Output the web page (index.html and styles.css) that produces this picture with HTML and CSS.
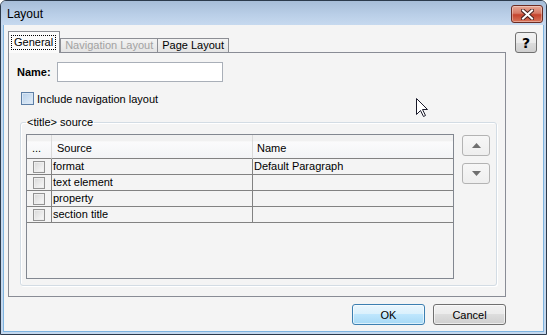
FILE: index.html
```html
<!DOCTYPE html>
<html>
<head>
    <title>Layout</title>
    <link rel="stylesheet" href="styles.css">
</head>
<body>
    <div class="window">
        <div class="titlebar">
            <span class="title">Layout</span>
            <button class="close-btn" title="Close">
                <svg width="13" height="11" viewBox="0 0 13 11">
                    <path d="M2 1.5 L11 9.5 M11 1.5 L2 9.5" stroke="#4a2320" stroke-width="4" stroke-linecap="square"/>
                    <path d="M2 1.5 L11 9.5 M11 1.5 L2 9.5" stroke="#ffffff" stroke-width="2" stroke-linecap="square"/>
                </svg>
            </button>
        </div>

        <div class="client">
            <div class="main-column">
                <div class="tabs">
                    <div class="tab active"><span class="focus">General</span></div>
                    <div class="tab disabled">Navigation Layout</div>
                    <div class="tab">Page Layout</div>
                </div>

                <div class="tab-panel">
                    <div class="name-row">
                        <label for="name">Name:</label>
                        <input type="text" id="name" name="name">
                    </div>

                    <div class="check-row">
                        <span class="checkbox blue"></span>
                        <span>Include navigation layout</span>
                    </div>

                    <fieldset class="group">
                        <legend>&lt;title&gt; source</legend>
                        <div class="group-body">
                            <div class="source-list">
                                <table>
                                    <colgroup>
                                        <col class="col-check">
                                        <col class="col-source">
                                        <col class="col-name">
                                    </colgroup>
                                    <thead>
                                        <tr>
                                            <th class="dots">...</th>
                                            <th>Source</th>
                                            <th class="last">Name</th>
                                        </tr>
                                    </thead>
                                    <tbody>
                                        <tr>
                                            <td><span class="checkbox small"></span></td>
                                            <td>format</td>
                                            <td class="last">Default Paragraph</td>
                                        </tr>
                                        <tr>
                                            <td><span class="checkbox small"></span></td>
                                            <td>text element</td>
                                            <td class="last"></td>
                                        </tr>
                                        <tr>
                                            <td><span class="checkbox small"></span></td>
                                            <td>property</td>
                                            <td class="last"></td>
                                        </tr>
                                        <tr>
                                            <td><span class="checkbox small"></span></td>
                                            <td>section title</td>
                                            <td class="last"></td>
                                        </tr>
                                    </tbody>
                                </table>
                            </div>

                            <div class="move-buttons">
                                <button class="move-btn" title="Move up">
                                    <svg width="9" height="5" viewBox="0 0 9 5"><path d="M4.5 0 L9 5 L0 5 Z" fill="#6f6f6f"/></svg>
                                </button>
                                <button class="move-btn" title="Move down">
                                    <svg width="9" height="5" viewBox="0 0 9 5"><path d="M0 0 L9 0 L4.5 5 Z" fill="#6f6f6f"/></svg>
                                </button>
                            </div>
                        </div>
                    </fieldset>
                </div>

                <div class="footer">
                    <button class="btn default">OK</button>
                    <button class="btn">Cancel</button>
                </div>
            </div>

            <button class="help-btn">?</button>
        </div>

        <svg class="cursor" width="13" height="20" viewBox="0 0 13 20">
            <path d="M0.5 0.5 V16.5 L4.5 12.5 L7.5 18.5 L9.5 17.5 L6.5 11.5 H11.5 Z" fill="#ffffff" stroke="#1a1a2a" stroke-width="1" stroke-linejoin="miter"/>
        </svg>
    </div>
</body>
</html>
```

FILE: styles.css
```css
body {
    margin: 0;
    font-family: "Liberation Sans", Arial, sans-serif;
    font-size: 11px;
    color: #000;
    background: #ffffff;
}

button,
input {
    font: inherit;
    color: inherit;
}

.window {
    position: relative;
    width: 547px;
    height: 335px;
    box-sizing: border-box;
    border: 1px solid #2c3a4c;
    border-radius: 6px 6px 0 0;
    background: #c4d8ee;
    display: flex;
    flex-direction: column;
    overflow: hidden;
}

.titlebar {
    height: 24px;
    flex-shrink: 0;
    display: flex;
    align-items: flex-start;
    justify-content: space-between;
    padding: 0 3px 0 6px;
    background: linear-gradient(#a7bdd8, #b9cee7 55%, #c6d9ef);
}

.title {
    font-size: 12px;
    line-height: 16px;
    margin-top: 5px;
}

.close-btn {
    width: 32px;
    height: 18px;
    margin-top: 4px;
    padding: 0;
    border: 1px solid #6b2b22;
    border-radius: 3px;
    background: linear-gradient(#e7a795, #d67a66 45%, #c5432d 55%, #d8755a);
    box-shadow: inset 0 0 0 1px rgba(255, 255, 255, 0.35);
    display: flex;
    align-items: center;
    justify-content: center;
}

.client {
    flex: 1;
    margin: 0 2px 2px;
    border: 1px solid #7eb4e0;
    border-top: none;
    background: #f4f4f4;
    display: flex;
    align-items: flex-start;
    padding: 7px 0 0 4px;
}

.main-column {
    width: 498px;
    display: flex;
    flex-direction: column;
}

.tabs {
    display: flex;
    align-items: flex-end;
    height: 20px;
}

.tab {
    height: 13px;
    line-height: 13px;
    padding: 0 4px;
    border: 1px solid #8c8e94;
    border-bottom: none;
    margin-right: -1px;
    background: linear-gradient(#f3f3f3, #e4e4e4);
    white-space: nowrap;
}

.tab.disabled {
    color: #a2a2a2;
}

.tab.active {
    position: relative;
    z-index: 1;
    height: 18px;
    padding: 3px 3px 0 2px;
    margin-bottom: -1px;
    margin-right: 0;
    background: #fbfbfb;
}

.tab.active + .tab {
    border-left-color: #8c8e94;
}

.focus {
    display: inline-block;
    padding: 0 2px;
    border: 1px dotted #000;
    line-height: 13px;
}

.tab-panel {
    height: 245px;
    box-sizing: border-box;
    border: 1px solid #898c95;
    padding: 9px 8px 0;
    background: #f4f4f4;
}

.name-row {
    display: flex;
    align-items: center;
    gap: 6px;
    height: 20px;
}

.name-row label {
    font-weight: bold;
}

.name-row input {
    width: 166px;
    height: 20px;
    box-sizing: border-box;
    border: 1px solid #a9afb8;
    background: #ffffff;
    padding: 0 3px;
}

.check-row {
    display: flex;
    align-items: center;
    gap: 3px;
    height: 13px;
    margin: 10px 0 0 4px;
}

.checkbox {
    display: block;
    box-sizing: border-box;
}

.checkbox.blue {
    width: 13px;
    height: 13px;
    border: 1px solid #5d7fa6;
    background: linear-gradient(135deg, #b6cfe9, #e3eef9);
    box-shadow: inset 0 0 0 1px #d8e6f4;
}

.checkbox.small {
    width: 12px;
    height: 12px;
    margin: 2px auto 1px;
    border: 1px solid #939393;
    background: linear-gradient(135deg, #d8d8d8, #fafafa);
    box-shadow: inset 0 0 0 1px #eeeeee;
}

.group {
    margin: 10px 0 0 3px;
    padding: 5px 6px 6px 5px;
    border: 1px solid #d3dce4;
    border-radius: 3px;
    box-shadow: inset 1px 1px 0 #ffffff, 1px 1px 0 #ffffff;
    min-width: 0;
}

.group legend {
    padding: 0 1px;
    line-height: 14px;
}

.group-body {
    display: flex;
    gap: 8px;
    align-items: flex-start;
}

.source-list {
    width: 428px;
    height: 145px;
    box-sizing: border-box;
    border: 1px solid #828790;
    background: #f4f4f4;
}

.source-list table {
    width: 100%;
    table-layout: fixed;
    border-collapse: separate;
    border-spacing: 0;
}

.col-check {
    width: 25px;
}

.col-source {
    width: 201px;
}

.col-name {
    width: 200px;
}

.source-list th {
    font-weight: normal;
    text-align: left;
    line-height: 13px;
    padding: 7px 0 3px 5px;
    border-right: 1px solid #dadada;
    border-bottom: 1px solid #828282;
    background: linear-gradient(#f1f1f1, #f1f1f1 25%, #fbfbfc 30%, #f3f4f6);
    white-space: nowrap;
}

.source-list th.last {
    padding-left: 4px;
}

.source-list td {
    line-height: 15px;
    padding: 0 0 0 1px;
    border-right: 1px solid #828282;
    border-bottom: 1px solid #828282;
    white-space: nowrap;
    overflow: hidden;
}

.source-list td:first-child {
    padding: 0;
}

.source-list .last {
    border-right: none;
}

.move-buttons {
    display: flex;
    flex-direction: column;
    gap: 7px;
    margin-top: 1px;
}

.move-btn {
    width: 28px;
    height: 21px;
    padding: 0;
    border: 1px solid #b3b3b3;
    border-radius: 3px;
    background: linear-gradient(#f7f7f7, #eeeeee);
    display: flex;
    align-items: center;
    justify-content: center;
}

.footer {
    display: flex;
    justify-content: flex-end;
    gap: 8px;
    margin-top: 7px;
}

.btn {
    width: 73px;
    height: 21px;
    padding: 0;
    border: 1px solid #707070;
    border-radius: 3px;
    background: linear-gradient(#f2f2f2, #ebebeb 50%, #dddddd 50%, #cfcfcf);
    box-shadow: inset 0 0 0 1px rgba(255, 255, 255, 0.6);
}

.btn.default {
    border-color: #3c7fb1;
    background: linear-gradient(#eaf6fd, #d9f0fc 50%, #bee6fd 50%, #a7d9f5);
}

.help-btn {
    width: 22px;
    height: 21px;
    margin-left: 9px;
    padding: 0;
    border: 1px solid #707070;
    border-radius: 3px;
    background: linear-gradient(#f2f2f2, #ebebeb 50%, #dddddd 50%, #cfcfcf);
    font-family: "DejaVu Sans", sans-serif;
    font-size: 14px;
    font-weight: bold;
    line-height: 18px;
}

.cursor {
    position: absolute;
    left: 415px;
    top: 97px;
}
```
